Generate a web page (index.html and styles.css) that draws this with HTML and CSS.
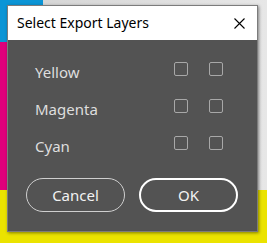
FILE: index.html
```html
<!DOCTYPE html>
<html lang="en">
<head>
<meta charset="utf-8">
<title>Select Export Layers</title>
<link rel="stylesheet" href="styles.css">
</head>
<body>
<div class="scene">
  <div class="backdrop">
    <div class="top-band">
      <div class="swatches">
        <div class="swatch cyan"></div>
        <div class="swatch magenta"></div>
      </div>
      <div class="grey-area"></div>
    </div>
    <div class="swatch yellow"></div>
  </div>

  <div class="dialog" role="dialog" aria-label="Select Export Layers">
    <div class="titlebar">
      <span class="title">Select Export Layers</span>
      <button class="close" aria-label="Close">
        <svg width="11" height="11" viewBox="0 0 11 11"><path d="M0.5 0.5 L10.5 10.5 M10.5 0.5 L0.5 10.5" stroke="#000" stroke-width="1.1" fill="none"/></svg>
      </button>
    </div>
    <div class="content">
      <div class="layers">
        <span class="label">Yellow</span><span class="check"></span><span class="check"></span>
        <span class="label">Magenta</span><span class="check"></span><span class="check"></span>
        <span class="label">Cyan</span><span class="check"></span><span class="check"></span>
      </div>
      <div class="actions">
        <button class="btn cancel">Cancel</button>
        <button class="btn ok">OK</button>
      </div>
    </div>
  </div>
</div>
</body>
</html>
```
FILE: styles.css
```css
html, body {
  margin: 0;
  padding: 0;
}
body {
  width: 267px;
  height: 243px;
  overflow: hidden;
  font-family: "Noto Sans", "Open Sans", sans-serif;
}
.scene {
  position: relative;
  width: 267px;
  height: 243px;
}
.backdrop {
  display: flex;
  flex-direction: column;
  width: 100%;
  height: 100%;
}
.top-band {
  display: flex;
  height: 190px;
}
.swatches {
  display: flex;
  flex-direction: column;
  width: 43px;
}
.swatch.cyan {
  height: 42px;
  background: #0b95d6;
}
.swatch.magenta {
  flex: 1;
  background: #e0007b;
}
.grey-area {
  flex: 1;
  background: linear-gradient(90deg, #d6d6d6 0, #e9e9e9 250px, #f2f2f2 267px);
}
.swatch.yellow {
  flex: 1;
  background: #ebe300;
}

.dialog {
  position: absolute;
  left: 7px;
  top: 5px;
  width: 251px;
  height: 227px;
  box-sizing: border-box;
  border: 1px solid #7c7c7c;
  background: #535353;
  box-shadow: 1px 1px 3px rgba(0, 0, 0, 0.45);
  display: flex;
  flex-direction: column;
}
.titlebar {
  height: 34px;
  background: #fff;
  display: flex;
  align-items: center;
  justify-content: space-between;
  padding: 0 12px 0 9px;
}
.title {
  font-size: 14px;
  color: #000;
  line-height: 20px;
}
.close {
  border: 0;
  background: none;
  padding: 0;
  width: 11px;
  height: 11px;
  display: flex;
}
.content {
  flex: 1;
  display: flex;
  flex-direction: column;
  padding: 22px 34px 0 18px;
}
.layers {
  display: grid;
  grid-template-columns: 1fr 14px 14px;
  column-gap: 21px;
  row-gap: 17px;
  align-items: start;
  padding-left: 9px;
}
.label {
  font-size: 15px;
  line-height: 20px;
  color: #dedede;
}
.check {
  width: 14px;
  height: 14px;
  box-sizing: border-box;
  border: 1px solid #a8a8a8;
  border-radius: 2px;
}
.actions {
  display: flex;
  gap: 14px;
  margin-top: 22px;
  margin-right: -15px;
}
.btn {
  width: 99px;
  height: 34px;
  box-sizing: border-box;
  border-radius: 17px;
  background: transparent;
  font-family: "Noto Sans", "Open Sans", sans-serif;
  font-size: 15px;
  color: #f2f2f2;
  padding: 0;
}
.btn.cancel {
  border: 1px solid #cfcfcf;
}
.btn.ok {
  border: 2px solid #ffffff;
}
```
